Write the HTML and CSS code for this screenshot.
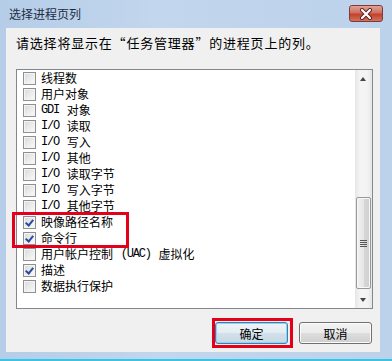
FILE: index.html
```html
<!DOCTYPE html>
<html lang="zh-CN">
<head>
  <meta charset="UTF-8" />
  <title>选择进程页列</title>
  <link rel="stylesheet" href="styles.css">
</head>
<body>
  <div class="window">
    <div class="titlebar">
      <span class="title">选择进程页列</span>
      <span class="close">
        <svg width="16" height="12" viewBox="0 0 16 12">
          <path d="M4 2 L12 10 M12 2 L4 10" stroke="#5a2020" stroke-width="4" stroke-linecap="round"/>
          <path d="M4 2 L12 10 M12 2 L4 10" stroke="#fff" stroke-width="2.2" stroke-linecap="round"/>
        </svg>
      </span>
    </div>

    <div class="client">
      <p class="prompt">请选择将显示在“任务管理器”的进程页上的列。</p>

      <div class="listbox">
        <ul class="items">
          <li><span class="box"></span>线程数</li>
          <li><span class="box"></span>用户对象</li>
          <li><span class="box"></span><span class="en">GDI</span> 对象</li>
          <li><span class="box"></span><span class="en">I/O</span> 读取</li>
          <li><span class="box"></span><span class="en">I/O</span> 写入</li>
          <li><span class="box"></span><span class="en">I/O</span> 其他</li>
          <li><span class="box"></span><span class="en">I/O</span> 读取字节</li>
          <li><span class="box"></span><span class="en">I/O</span> 写入字节</li>
          <li><span class="box"></span><span class="en">I/O</span> 其他字节</li>
          <li><span class="box checked"></span>映像路径名称</li>
          <li><span class="box checked"></span>命令行</li>
          <li><span class="box"></span>用户帐户控制 <span class="en">(UAC)</span> 虚拟化</li>
          <li><span class="box checked"></span>描述</li>
          <li><span class="box"></span>数据执行保护</li>
        </ul>
        <div class="scrollbar">
          <div class="arrow up"></div>
          <div class="track">
            <div class="thumb"><span class="grip"></span></div>
          </div>
          <div class="arrow down"></div>
        </div>
      </div>

      <div class="buttons">
        <button class="btn default">确定</button>
        <button class="btn">取消</button>
      </div>
    </div>

    <!-- red annotation frames -->
    <div class="mark mark-rows"></div>
    <div class="mark mark-ok"></div>
  </div>
</body>
</html>
```

FILE: styles.css
```css
body {
  margin: 0;
  font-family: "Noto Sans CJK SC", sans-serif;
  font-size: 12px;
  color: #000;
}
.window {
  position: relative;
  width: 392px;
  height: 361px;
  box-sizing: border-box;
  display: flex;
  flex-direction: column;
  padding: 0 12px 7px 6px;
  background: linear-gradient(90deg, #b5cde8 0%, #c2d6ed 40%, #bcd2eb 100%);
  border-bottom: 2px solid #38c4e6;
}
.titlebar {
  height: 28px;
  display: flex;
  align-items: center;
  justify-content: space-between;
  flex-shrink: 0;
}
.title {
  padding-left: 3px;
  color: #1e2d44;
  line-height: 16px;
  margin-top: -1px;
}
.close {
  width: 32px;
  height: 15px;
  margin-right: -3px;
  margin-top: -1px;
  display: flex;
  align-items: center;
  justify-content: center;
  border: 1px solid #7e3a3a;
  border-radius: 3px;
  background: linear-gradient(#e3a394 0%, #cf6f5f 45%, #c3412e 55%, #d1735c 100%);
}
.client {
  flex: 1;
  background: #f0f0f0;
  padding: 0 7px 0 10px;
  display: flex;
  flex-direction: column;
}
.prompt {
  margin: 7px 0 18px;
  font-size: 13px;
  line-height: 16px;
  letter-spacing: 0.8px;
}
.listbox {
  height: 240px;
  box-sizing: border-box;
  border: 1px solid #828790;
  background: #fff;
  display: flex;
}
.items {
  flex: 1;
  list-style: none;
  margin: 0;
  padding: 0;
}
.items li {
  height: 16px;
  display: flex;
  align-items: center;
  gap: 5px;
  padding-left: 6px;
  line-height: 16px;
  white-space: pre;
}
.en {
  font-family: "Liberation Mono", monospace;
  letter-spacing: -1.2px;
}
.box {
  width: 11px;
  height: 11px;
  flex-shrink: 0;
  border: 1px solid #8e8f8f;
  background: linear-gradient(135deg, #d8d8d8 0%, #eeeeee 60%, #fbfbfb 100%);
  box-shadow: inset 0 0 0 1px #f4f4f4;
  position: relative;
}
.box.checked::after {
  content: "";
  position: absolute;
  left: 3px;
  top: 1px;
  width: 3px;
  height: 6px;
  border: solid #2a4aa0;
  border-width: 0 2px 2px 0;
  transform: rotate(40deg);
}
.scrollbar {
  width: 17px;
  display: flex;
  flex-direction: column;
  background: linear-gradient(90deg, #e6e6e6, #f4f4f4 30%, #f4f4f4 70%, #e6e6e6);
}
.arrow {
  height: 17px;
  position: relative;
}
.arrow::after {
  content: "";
  position: absolute;
  left: 5px;
  border-left: 3.5px solid transparent;
  border-right: 3.5px solid transparent;
}
.arrow.up::after {
  top: 7px;
  border-bottom: 4px solid #444;
}
.arrow.down::after {
  top: 7px;
  border-top: 4px solid #444;
}
.track {
  flex: 1;
}
.thumb {
  margin: 110px 1px 0 1px;
  height: 92px;
  box-sizing: border-box;
  border: 1px solid #979797;
  border-radius: 2px;
  background: linear-gradient(90deg, #f2f2f2, #e6e6e6 50%, #d7d7d7 51%, #cfcfcf);
  box-shadow: inset 0 0 0 1px #f8f8f8;
  display: flex;
  align-items: center;
  justify-content: center;
}
.grip {
  width: 7px;
  height: 7px;
  background: repeating-linear-gradient(#555 0 1px, transparent 1px 2px);
}
.buttons {
  display: flex;
  justify-content: flex-end;
  gap: 11px;
  margin-top: 13px;
  padding-right: 1px;
}
.btn {
  width: 73px;
  height: 22px;
  border: 1px solid #707070;
  border-radius: 3px;
  background: linear-gradient(#f2f2f2 0%, #ebebeb 50%, #dddddd 51%, #cfcfcf 100%);
  box-shadow: inset 0 0 0 1px #fbfbfb;
  font-family: "Noto Sans CJK SC", sans-serif;
  font-size: 12px;
  padding: 0;
  color: #000;
}
.btn.default {
  border-color: #3c7fb1;
  background: linear-gradient(#eef4f8 0%, #e2ecf2 50%, #d2e1ea 51%, #c6d9e4 100%);
  box-shadow: inset 0 0 0 1px #8fd3f2;
}
.mark {
  position: absolute;
  box-sizing: border-box;
  border: 3px solid #e3001b;
}
.mark-rows {
  left: 12px;
  top: 212px;
  width: 117px;
  height: 36px;
}
.mark-ok {
  left: 212px;
  top: 318px;
  width: 81px;
  height: 30px;
}
```
